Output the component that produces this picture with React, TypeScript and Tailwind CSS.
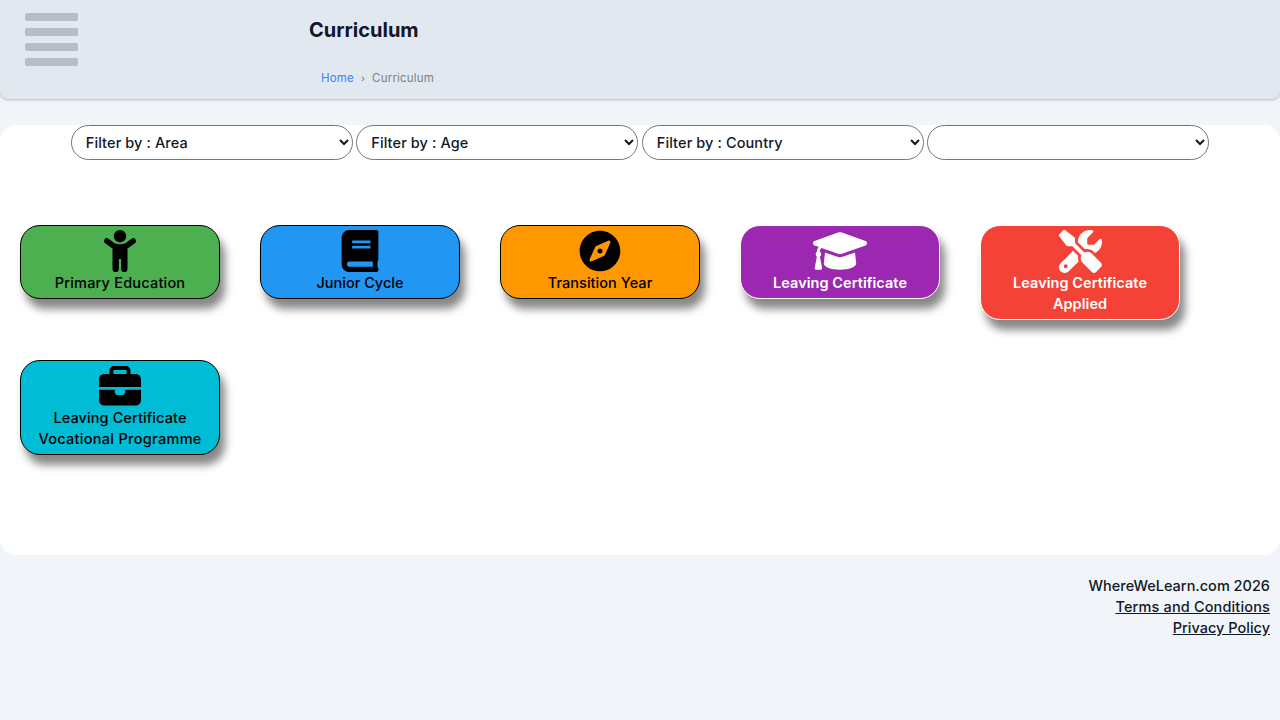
import { FaBook, FaCompass, FaGraduationCap } from "react-icons/fa";
import { FaBriefcase, FaScrewdriverWrench } from "react-icons/fa6";
import type { ReactNode } from "react";

const font = "font-['Inter','Liberation_Sans',sans-serif]";

function ChildIcon() {
  return (
    <svg width="34" height="42" viewBox="0 0 34 42" fill="currentColor">
      <circle cx="17" cy="6.2" r="6.2" />
      <path d="M3.8 11 L10 15.5 Q17 18.5 24 15.5 L30.2 11" fill="none" stroke="currentColor" strokeWidth="5.5" strokeLinecap="round" strokeLinejoin="round" />
      <path d="M9.5 15 H24.5 V39 a3.2 3.2 0 0 1 -6.4 0 V29 H15.9 V39 a3.2 3.2 0 0 1 -6.4 0 Z" />
    </svg>
  );
}

function Filter({ label }: { label: string }) {
  return (
    <select className="w-[282px] h-[35px] rounded-[18px] border border-[#767676] bg-white pl-[10px] pr-[2px] text-[14.5px] font-medium text-[#111827] tracking-[0.1px] font-['Inter','Liberation_Sans',sans-serif]">
      <option>{label}</option>
    </select>
  );
}

function Card({ bg, light, icon, lines }: { bg: string; light?: boolean; icon: ReactNode; lines: [string, string][] }) {
  return (
    <div
      className={`w-[200px] flex flex-col items-center rounded-[20px] border pt-[4px] pb-[5px] shadow-[5px_10px_8px_#888888] ${bg} ${
        light ? "border-white text-white font-semibold" : "border-black text-black font-medium"
      }`}
    >
      <div className="h-[42px] flex items-center justify-center">{icon}</div>
      <div className="text-[14.5px] leading-[21px] text-center">
        {lines.map(([l, t]) => (
          <div key={l} className={t}>{l}</div>
        ))}
      </div>
    </div>
  );
}

export default function App() {
  return (
    <div className={`min-h-[720px] bg-[#f1f5f9] ${font}`}>
      <header className="h-[99px] bg-[#e2e8f0] rounded-b-lg shadow-[0_1px_3px_rgba(0,0,0,0.25)] flex">
        <div className="w-[309px] pl-[25px] pt-[13px] flex flex-col gap-[7px] shrink-0">
          <div className="w-[53px] h-[8px] rounded-[2px] bg-[#b6bdc9]" />
          <div className="w-[53px] h-[8px] rounded-[2px] bg-[#b6bdc9]" />
          <div className="w-[53px] h-[8px] rounded-[2px] bg-[#b6bdc9]" />
          <div className="w-[53px] h-[8px] rounded-[2px] bg-[#b6bdc9]" />
        </div>
        <div className="flex flex-col">
          <h1 className="text-[20px] font-bold leading-[24px] mt-[18px] text-[#0f172a]">Curriculum</h1>
          <div className="mt-[24px] ml-[12px] flex items-center text-[11.5px] leading-[24px] tracking-[0.2px]">
            <span className="text-[#3b82f6]">Home</span>
            <span className="text-[#6b7280] mx-[7px] text-[10px]">›</span>
            <span className="text-[#808080]">Curriculum</span>
          </div>
        </div>
      </header>
      <main className="mt-[26px] h-[430px] bg-white rounded-[16px]">
        <div className="flex justify-center gap-[3.5px]">
          <Filter label="Filter by : Area" />
          <Filter label="Filter by : Age" />
          <Filter label="Filter by : Country" />
          <Filter label="" />
        </div>
        <div className="mt-[65px] pl-[20px] flex flex-wrap items-start gap-[40px]">
          <Card bg="bg-[#4caf50]" icon={<ChildIcon />} lines={[["Primary Education", "tracking-[0.2px]"]]} />
          <Card bg="bg-[#2196f3]" icon={<FaBook className="text-[42px]" />} lines={[["Junior Cycle", "tracking-[0px]"]]} />
          <Card bg="bg-[#ff9800]" icon={<FaCompass className="text-[42px]" />} lines={[["Transition Year", "tracking-[0.05px]"]]} />
          <Card bg="bg-[#9c27b0]" light icon={<FaGraduationCap className="w-[54px] h-[50px] shrink-0" preserveAspectRatio="none" />} lines={[["Leaving Certificate", "tracking-[0.05px]"]]} />
          <Card bg="bg-[#f44336]" light icon={<FaScrewdriverWrench className="text-[43px]" />} lines={[["Leaving Certificate", "tracking-[0.05px]"], ["Applied", "tracking-[0.05px]"]]} />
          <Card bg="bg-[#00bcd4]" icon={<FaBriefcase className="text-[42px] mt-[1px]" />} lines={[["Leaving Certificate", "tracking-[0.1px]"], ["Vocational Programme", "tracking-[0.3px]"]]} />
        </div>
      </main>
      <footer className="pt-[20px] pr-[10px] text-right text-[14.5px] leading-[21px] font-medium text-[#111827]">
        <div className="tracking-[0px]">WhereWeLearn.com 2026</div>
        <div className="underline tracking-[0.15px]">Terms and Conditions</div>
        <div className="underline tracking-[0px]">Privacy Policy</div>
      </footer>
    </div>
  );
}
